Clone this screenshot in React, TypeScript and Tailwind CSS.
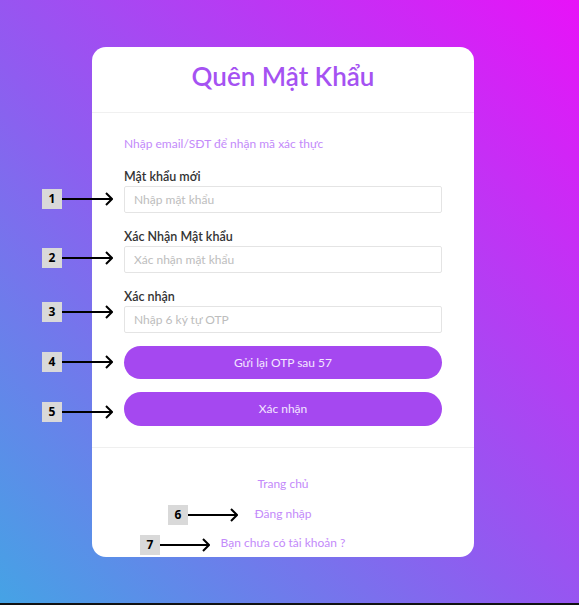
import React from "react";

const font = { fontFamily: 'Lato, "Noto Sans", sans-serif' };

function Marker({ n, x, y, len }: { n: number; x: number; y: number; len: number }) {
  return (
    <div className="absolute flex items-center" style={{ left: x, top: y }}>
      <div className="w-[20px] h-[20px] bg-[#d9d9d9] flex items-center justify-center text-[12px] font-bold text-black leading-none" style={{ fontFamily: '"Noto Sans", sans-serif' }}>
        {n}
      </div>
      <svg width={len} height={14} viewBox={`0 0 ${len} 14`} className="block">
        <line x1={0} y1={7} x2={len - 1} y2={7} stroke="black" strokeWidth={2} />
        <polyline points={`${len - 7},1 ${len - 1},7 ${len - 7},13`} fill="none" stroke="black" strokeWidth={2} />
      </svg>
    </div>
  );
}

function Field({ label, placeholder }: { label: string; placeholder: string }) {
  return (
    <div className="flex flex-col">
      <label className="text-[12.5px] leading-[16px] font-semibold text-[#333] mb-px">{label}</label>
      <input
        className="h-[27px] w-full border border-[#e4e4e4] rounded-[2px] px-[9px] text-[12px] placeholder:text-[#bdbdbd] outline-none bg-white"
        placeholder={placeholder}
        style={font}
      />
    </div>
  );
}

export default function App() {
  return (
    <div className="w-[579px] h-[605px] flex flex-col overflow-hidden relative" style={font}>
      <div className="flex-1 bg-[linear-gradient(to_top_right,#45a3e5_0%,#8f5cf0_45%,#e812f8_100%)] pt-[47px]">
        <div className="ml-[92px] w-[382px] h-[510px] bg-white rounded-[14px] flex flex-col overflow-hidden">
          <div className="h-[66px] flex items-center justify-center border-b border-[#f0f0f0]">
            <h1 className="text-[26px] font-semibold text-[#a552f2] leading-none pb-[8px]">Quên Mật Khẩu</h1>
          </div>
          <div className="px-[32px] pt-[21px] pb-[21px] flex flex-col border-b border-[#efefef]">
            <p className="text-[12px] leading-[20px] text-[#c38afa] mb-[15px]">Nhập email/SĐT để nhận mã xác thực</p>
            <div className="flex flex-col gap-[16px]">
              <Field label="Mật khẩu mới" placeholder="Nhập mật khẩu" />
              <Field label="Xác Nhận Mật khẩu" placeholder="Xác nhận mật khẩu" />
              <Field label="Xác nhận" placeholder="Nhập 6 ký tự OTP" />
            </div>
            <div className="flex flex-col gap-[13px] mt-[13px]">
              <button className="h-[33px] w-full rounded-full bg-[#a548f0] text-[#f3e6ff] text-[12px]" style={font}>
                Gửi lại OTP sau 57
              </button>
              <button className="h-[34px] w-full rounded-full bg-[#a548f0] text-[#f3e6ff] text-[12px]" style={font}>
                Xác nhận
              </button>
            </div>
          </div>
          <div className="flex flex-col items-center pt-[26px] gap-[9.5px] text-[12px] leading-[20px] text-[#c38afa]">
            <a>Trang chủ</a>
            <a>Đăng nhập</a>
            <a>Bạn chưa có tài khoản ?</a>
          </div>
        </div>
      </div>
      <div className="h-[2px] bg-[#111]" />
      <Marker n={1} x={42} y={189} len={51} />
      <Marker n={2} x={42} y={248} len={51} />
      <Marker n={3} x={42} y={302} len={51} />
      <Marker n={4} x={42} y={352} len={51} />
      <Marker n={5} x={42} y={402} len={51} />
      <Marker n={6} x={168} y={505} len={50} />
      <Marker n={7} x={140} y={535} len={50} />
    </div>
  );
}
